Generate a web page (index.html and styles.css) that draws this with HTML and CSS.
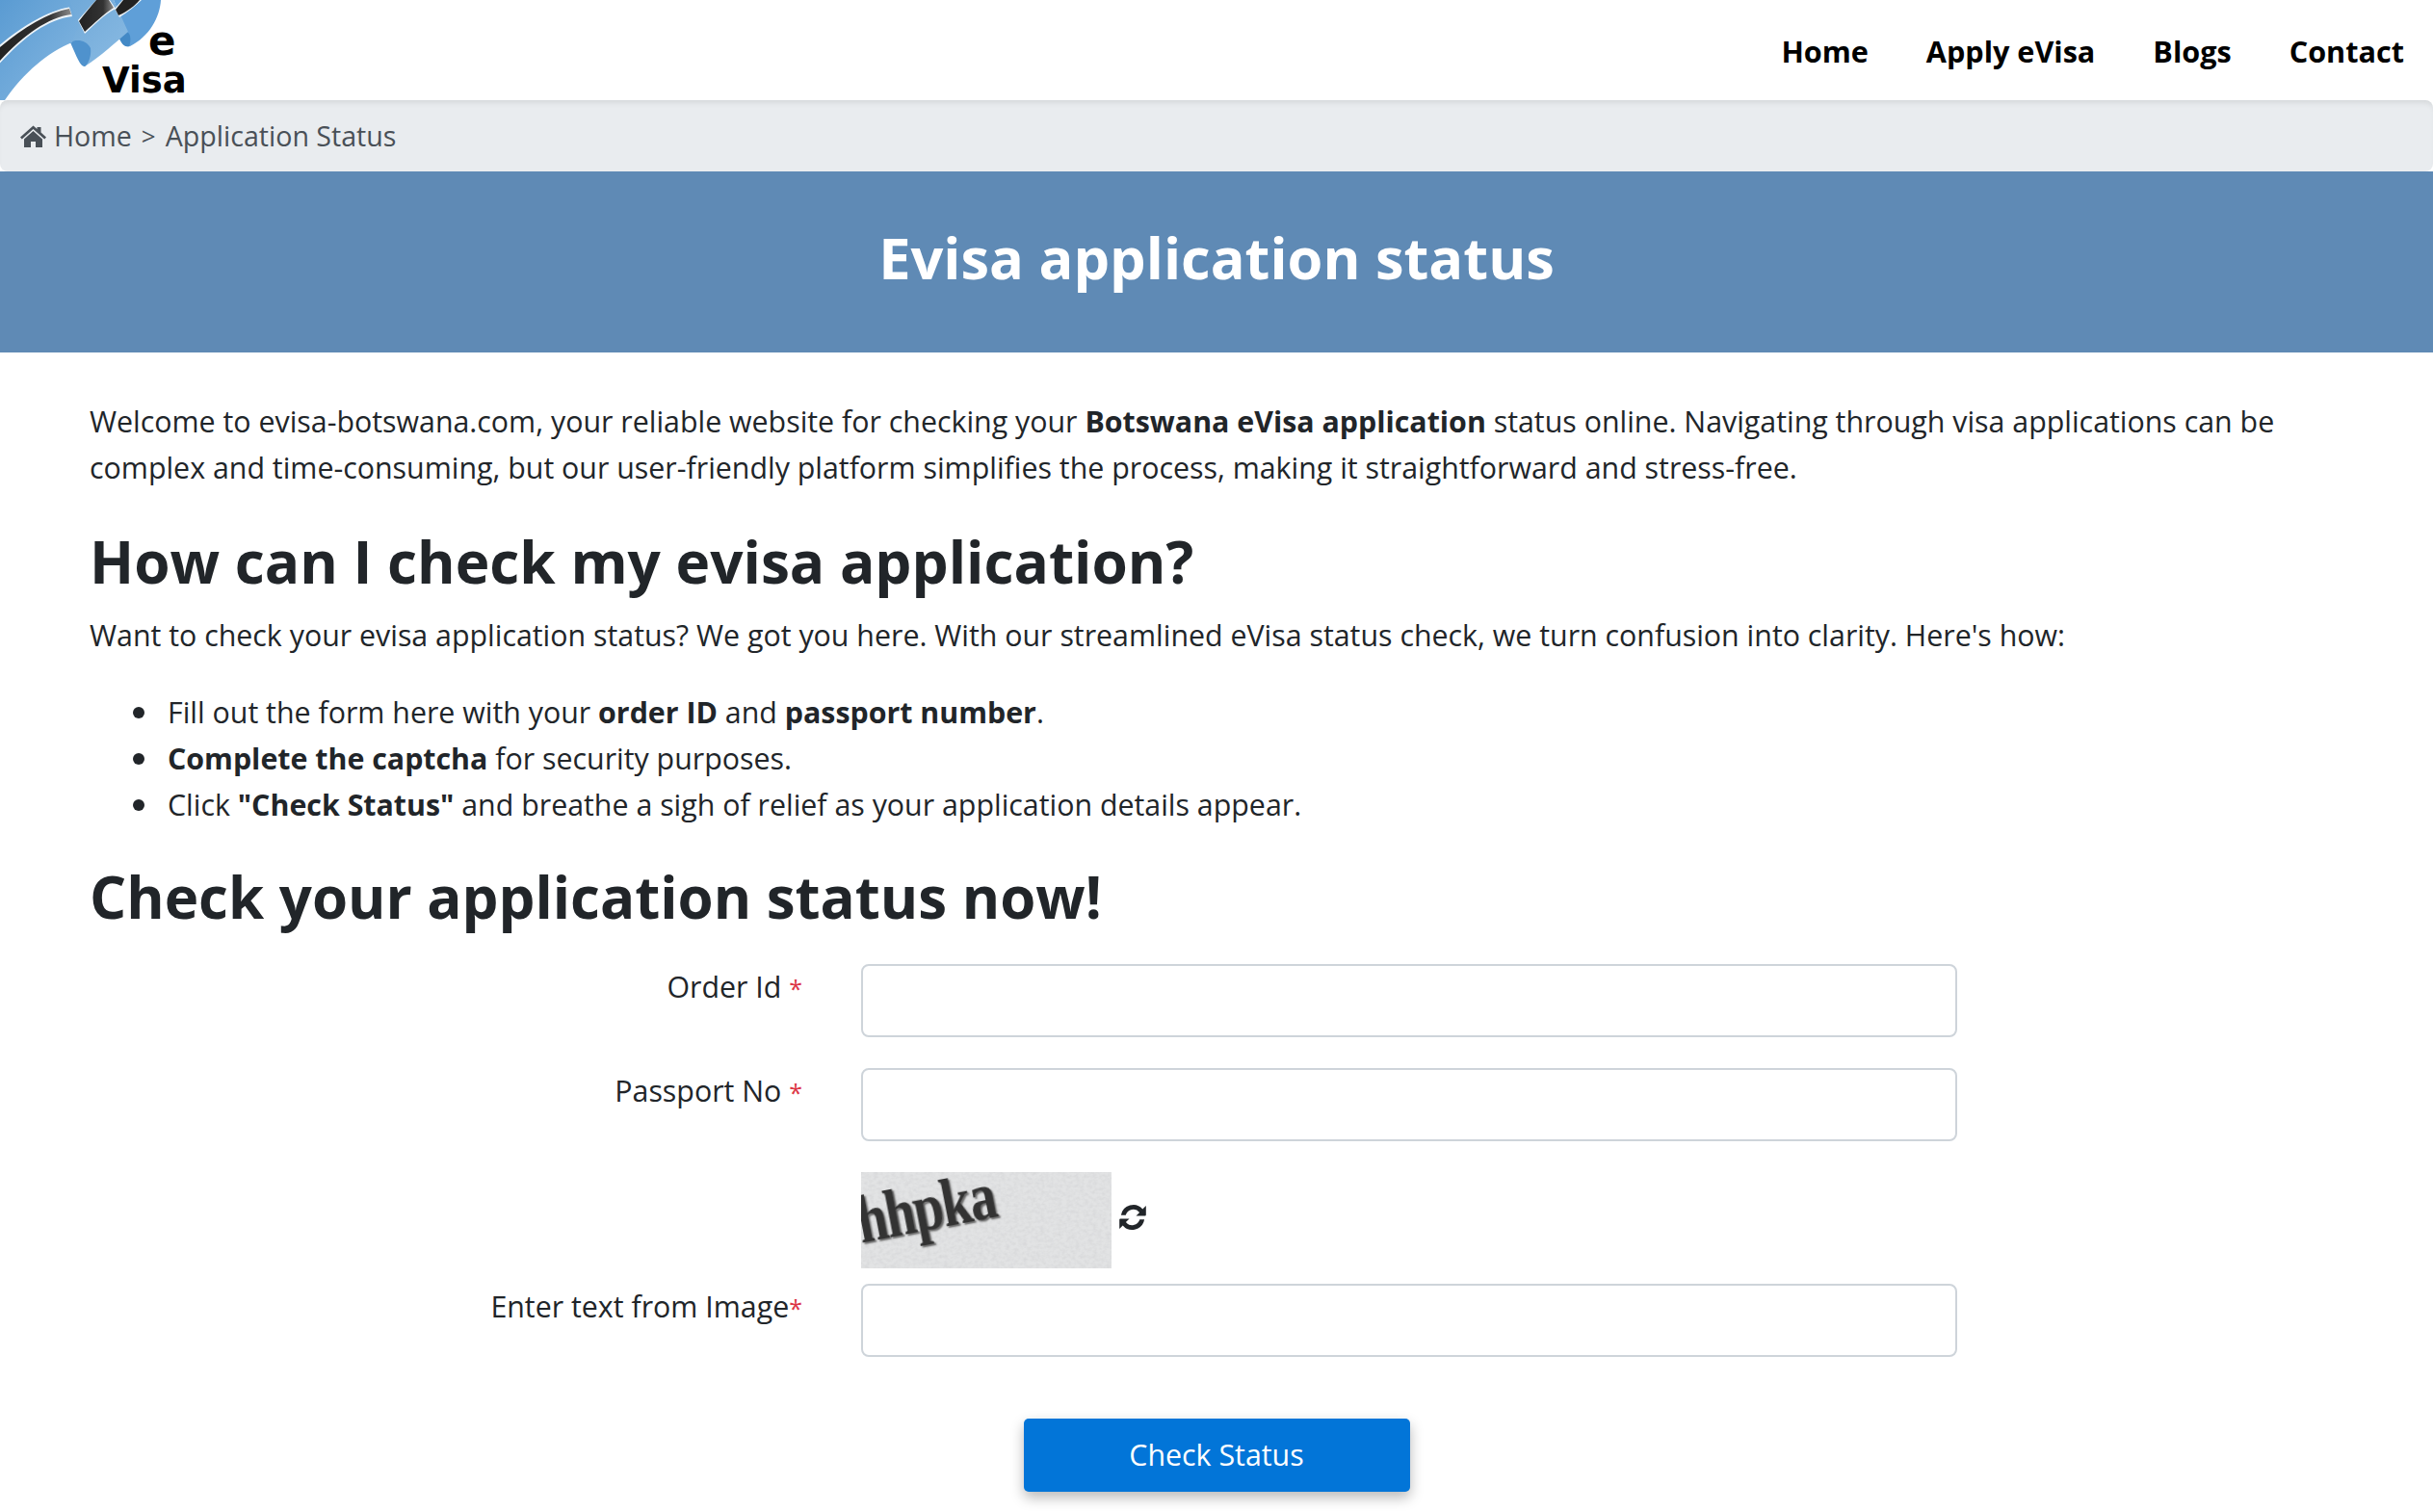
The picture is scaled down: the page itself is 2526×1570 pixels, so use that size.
FILE: index.html
```html
<!DOCTYPE html>
<html lang="en">
<head>
<meta charset="utf-8">
<title>Evisa application status</title>
<link rel="stylesheet" href="styles.css">
</head>
<body>
<header class="nav">
  <a class="logo" href="#">
    <svg class="logo-art" width="200" height="104" viewBox="0 0 200 104" aria-hidden="true">
      <defs>
        <linearGradient id="bandA" x1="0" y1="0" x2="1" y2="1"><stop offset="0" stop-color="#5a9bd2"/><stop offset="1" stop-color="#86b8e2"/></linearGradient>
        <linearGradient id="bandB" x1="0" y1="0" x2="1" y2="1"><stop offset="0" stop-color="#6fa8d8"/><stop offset="1" stop-color="#8abbe3"/></linearGradient>
        <linearGradient id="stripe" x1="0" y1="0" x2="1" y2="0"><stop offset="0" stop-color="#222"/><stop offset=".7" stop-color="#333"/><stop offset="1" stop-color="#8a8a8a"/></linearGradient>
      </defs>
      <path d="M118 0H167C166 18 155 38 135 48C128 50 124 42 122 34L130 30Z" fill="#5f9fd8"/>
      <path d="M123 34C128 30 133 32 135 37C136 42 135 46 134 48C128 50 124 42 123 34Z" fill="#4389c6"/>
      <path d="M68 0H118L133 33C120 44 105 58 88 69L74 44Z" fill="url(#bandB)"/>
      <path d="M73 44C80 40 90 42 94 50C95 58 92 66 88 69C84 70 80 60 73 44Z" fill="#4f92cd"/>
      <path d="M0 0H72L82 25L75 44C50 54 25 75 5 104H0Z" fill="url(#bandA)"/>
      <path d="M0 46.500C25 26 50 11 72 7.500L75 17C50 20 25 38 0 65.500Z" fill="#eef4f8"/>
      <path d="M0 49C25 28 50 13 72 9L74 15C50 18 25 36 0 63Z" fill="url(#stripe)"/>
      <path d="M81 21C88 13 95 5 100 0H114L120 9C108 15 99 25 88 35Z" fill="#eef4f8"/>
      <path d="M82 22C88 14 95 6 100 0H113L118 8C108 14 98 24 88 33Z" fill="url(#stripe)"/>
      <path d="M119 9 127 0H147C140 7 132 13 124 18Z" fill="#eef4f8"/>
      <path d="M120 10 128 0H145C140 6 132 12 123 16Z" fill="#222"/>
    </svg>
    <span class="logo-e">e</span>
    <span class="logo-visa">Visa</span>
  </a>
  <nav class="links">
    <a href="#">Home</a>
    <a href="#">Apply eVisa</a>
    <a href="#">Blogs</a>
    <a href="#">Contact</a>
  </nav>
</header>
<div class="crumb">
  <svg class="home" width="27" height="23" viewBox="0 0 27 23" aria-hidden="true"><path d="M13.5 0.5 17.5 4V2h4v5.500L27 12.500l-1.800 2L13.500 4 1.800 14.500 0 12.500ZM13.500 6 23 14.500V23h-7v-6h-5v6H4v-8.500Z" fill="#495057"/></svg>
  <span>Home</span><span class="sep">&gt;</span><span>Application Status</span>
</div>
<section class="banner"><h1>Evisa application status</h1></section>
<main class="content">
  <p class="intro">Welcome to evisa-botswana.com, your reliable website for checking your <b>Botswana eVisa application</b> status online. Navigating through visa applications can be complex and time-consuming, but our user-friendly platform simplifies the process, making it straightforward and stress-free.</p>
  <h2>How can I check my evisa application?</h2>
  <p class="lead">Want to check your evisa application status? We got you here. With our streamlined eVisa status check, we turn confusion into clarity. Here's how:</p>
  <ul>
    <li>Fill out the form here with your <b>order ID</b> and <b>passport number</b>.</li>
    <li><b>Complete the captcha</b> for security purposes.</li>
    <li>Click <b>"Check Status"</b> and breathe a sigh of relief as your application details appear.</li>
  </ul>
  <h2 class="second">Check your application status now!</h2>
  <form class="form">
    <label class="label">Order Id <i>*</i></label>
    <input class="input" type="text">
    <label class="label">Passport No <i>*</i></label>
    <input class="input" type="text">
    <div class="captcha-row">
      <div class="captcha">
        <svg class="grain" width="260" height="100" aria-hidden="true">
          <filter id="noise"><feTurbulence type="fractalNoise" baseFrequency="0.22 0.3" numOctaves="2" seed="4"/><feColorMatrix values="0 0 0 0 0.5  0 0 0 0 0.5  0 0 0 0 0.52  0.9 0 0 0 -0.32"/></filter>
          <rect width="260" height="100" fill="#e2e3e4"/>
          <rect width="260" height="100" filter="url(#noise)" opacity=".55"/>
        </svg>
        <span>hhpka</span>
      </div>
      <svg class="refresh" width="28" height="28" viewBox="0 0 28 28" aria-hidden="true"><path d="M27.800 2v9.500a1 1 0 0 1-1 1H17.500l3.600-3.600A8.300 8.300 0 0 0 6.700 11.800H1.900A12.800 12.800 0 0 1 24.300 5.600ZM.2 26v-9.500a1 1 0 0 1 1-1H10.500l-3.600 3.600A8.300 8.300 0 0 0 21.300 16.200h4.800A12.800 12.800 0 0 1 3.700 22.400Z" fill="#212529"/></svg>
    </div>
    <label class="label">Enter text from Image<i>*</i></label>
    <input class="input" type="text">
    <div class="actions"><button class="btn" type="button">Check Status</button></div>
  </form>
</main>
</body>
</html>
```
FILE: styles.css
```css
* { box-sizing: border-box; }
html, body { margin: 0; padding: 0; }
body {
  background: #fff;
  color: #212529;
  font-family: "Open Sans", "Noto Sans", sans-serif;
  font-size: 30.35px;
  line-height: 48px;
}
.nav {
  height: 104px;
  display: flex;
  justify-content: space-between;
  align-items: center;
  background: #fff;
}
.logo {
  position: relative;
  display: block;
  width: 200px;
  height: 104px;
  color: #000;
  text-decoration: none;
  font-family: "DejaVu Sans", sans-serif;
  font-weight: 700;
}
.logo-art { position: absolute; left: 0; top: 0; filter: blur(.6px); }
.logo-e { position: absolute; left: 154px; top: 21px; font-size: 42px; line-height: 44px; }
.logo-visa { position: absolute; left: 106px; top: 62px; font-size: 37px; line-height: 44px; }
.links {
  display: flex;
  gap: 60px;
  padding: 2px 30px 0 0;
  font-weight: 700;
  font-size: 30.600px;
}
.links a { color: #000; text-decoration: none; }
.crumb {
  height: 74px;
  display: flex;
  align-items: center;
  padding-left: 21px;
  background: #e9ecef;
  color: #495057;
  border-radius: 8px;
  box-shadow: inset 0 6px 6px -4px rgba(0,0,0,.1);
  font-size: 28.600px;
}
.home { margin-right: 8px; }
.sep { margin: 0 10px; font-size: 26px; }
.banner {
  height: 188px;
  display: flex;
  align-items: center;
  justify-content: center;
  padding-bottom: 10px;
  background: #5f8ab5;
}
h1 { margin: 0; color: #fff; font-size: 59.500px; font-weight: 700; line-height: 72px; }
.content { padding: 48px 93px 22px; }
p { margin: 0; }
.intro { width: 2340px; }
h2 { margin: 0; font-size: 60.300px; line-height: 77px; font-weight: 700; }
.intro + h2 { margin-top: 35px; }
.lead { margin-top: 14px; }
ul { margin: 32px 0 0; padding: 0 0 0 81px; list-style: none; }
li { position: relative; }
li::before {
  content: "";
  position: absolute;
  left: -36px;
  top: 18px;
  width: 12px;
  height: 12px;
  border-radius: 50%;
  background: #212529;
}
h2.second { margin-top: 33px; font-size: 60px; }
.form {
  display: grid;
  grid-template-columns: 740px 1138px 1fr;
  column-gap: 61px;
  margin-top: 31px;
}
.label { grid-column: 1; text-align: right; }
.label i { color: #dc3545; font-style: normal; font-size: 25px; }
.input {
  grid-column: 2;
  display: block;
  height: 76px;
  margin-bottom: 32px;
  border: 2px solid #ced4da;
  border-radius: 8px;
  background: #fff;
}
.captcha-row {
  grid-column: 2;
  display: flex;
  align-items: center;
  gap: 8px;
  margin-bottom: 16px;
}
.captcha {
  position: relative;
  width: 260px;
  height: 100px;
  overflow: hidden;
  background-color: #e0e1e2;
}
.grain { position: absolute; left: 0; top: 0; }
.captcha span {
  position: relative;
  display: block;
  width: 300px;
  margin: 21px 0 0 -4px;
  font-family: "Liberation Serif", serif;
  font-weight: 700;
  font-size: 70px;
  line-height: 60px;
  color: #333;
  transform: rotate(-11deg) scaleX(.8);
  transform-origin: 0 50%;
  text-shadow: 2px 2px 2px #666;
  letter-spacing: -2px;
  filter: blur(.6px);
}
.refresh { margin-bottom: 6px; }
.actions {
  grid-column: 1 / -1;
  display: flex;
  justify-content: center;
  padding-top: 32px;
}
.btn {
  width: 401px;
  height: 76px;
  border: 0;
  border-radius: 5px;
  background: #0275d8;
  color: #fff;
  font: inherit;
  box-shadow: 0 6px 14px rgba(0,0,0,.28);
}
```
